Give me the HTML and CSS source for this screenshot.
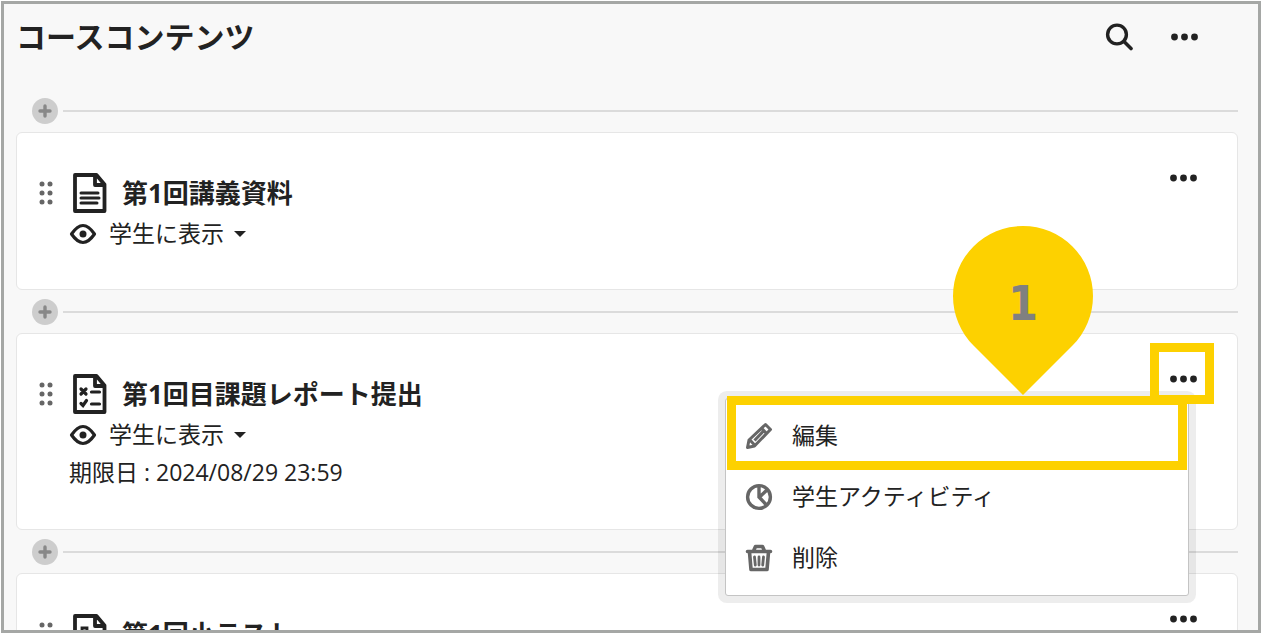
FILE: index.html
```html
<!DOCTYPE html>
<html lang="ja">
<head>
<meta charset="utf-8">
<title>コースコンテンツ</title>
<link rel="stylesheet" href="styles.css">
</head>
<body>
<svg class="defs" aria-hidden="true">
  <symbol id="more" viewBox="0 0 27 30"><circle cx="3.5" cy="15" r="3.4"/><circle cx="13.5" cy="15" r="3.4"/><circle cx="23.5" cy="15" r="3.4"/></symbol>
  <symbol id="grip" viewBox="0 0 14 26"><circle cx="3" cy="4" r="2.5"/><circle cx="11" cy="4" r="2.5"/><circle cx="3" cy="13" r="2.5"/><circle cx="11" cy="13" r="2.5"/><circle cx="3" cy="22" r="2.5"/><circle cx="11" cy="22" r="2.5"/></symbol>
  <symbol id="page" viewBox="0 0 34 40"><path d="M2 2H23.5L31.5 11.5V38H2Z M22 2V12H31.5" fill="none" stroke="currentColor" stroke-width="3.8" stroke-linejoin="round"/></symbol>
  <symbol id="eye" viewBox="0 0 28 24"><path d="M2.500 12C7 5.500 10 3.500 14 3.500S21 5.500 25.500 12C21 18.500 18 20.500 14 20.500S7 18.500 2.500 12Z" fill="none" stroke="currentColor" stroke-width="3.2" stroke-linejoin="round"/><circle cx="14" cy="12" r="3.5"/></symbol>
  <symbol id="plus" viewBox="0 0 26 26"><path d="M13 8V18M8 13H18" stroke="currentColor" stroke-width="3.4" stroke-linecap="round"/></symbol>
</svg>
<main class="frame">
  <header class="header">
    <h1 class="header-title">コースコンテンツ</h1>
    <button class="icon-button" aria-label="検索"><svg width="28" height="30" viewBox="0 0 28 30"><path d="M19 19.500L26 26.500" stroke="currentColor" stroke-width="3.6" stroke-linecap="round"/><circle cx="12" cy="12.500" r="9.400" fill="none" stroke="currentColor" stroke-width="3.400"/></svg></button>
    <button class="icon-button" aria-label="その他のオプション"><svg width="27" height="30"><use href="#more"/></svg></button>
  </header>

  <div class="divider"><button class="add" aria-label="コンテンツを追加"><svg width="26" height="26"><use href="#plus"/></svg></button></div>
  <section class="card">
    <svg class="grip" width="14" height="26"><use href="#grip"/></svg>
    <div class="content">
      <div class="title-row">
        <svg width="34" height="40" viewBox="0 0 34 40"><use href="#page"/><path d="M8 20H25M8 25H26M8 30H24" stroke="currentColor" stroke-width="3" stroke-linecap="round"/></svg>
        <h2 class="title">第1回講義資料</h2>
      </div>
      <button class="status"><svg width="28" height="24"><use href="#eye"/></svg><span class="label">学生に表示</span><span class="caret"></span></button>
    </div>
    <button class="icon-button" aria-label="その他のオプション"><svg width="27" height="30"><use href="#more"/></svg></button>
  </section>

  <div class="divider"><button class="add" aria-label="コンテンツを追加"><svg width="26" height="26"><use href="#plus"/></svg></button></div>
  <section class="card">
    <svg class="grip" width="14" height="26"><use href="#grip"/></svg>
    <div class="content">
      <div class="title-row">
        <svg width="34" height="40" viewBox="0 0 34 40"><use href="#page"/><path d="M8 15L13 20M13 15L8 20M18.500 18H26.500M8 29.500L10 31.500L13.500 26.500M18.500 30H26.500" fill="none" stroke="currentColor" stroke-width="3.2" stroke-linecap="round"/></svg>
        <h2 class="title">第1回目課題レポート提出</h2>
      </div>
      <button class="status"><svg width="28" height="24"><use href="#eye"/></svg><span class="label">学生に表示</span><span class="caret"></span></button>
      <p class="due">期限日 : 2024/08/29 23:59</p>
    </div>
    <button class="icon-button" aria-label="その他のオプション"><svg width="27" height="30"><use href="#more"/></svg></button>
    <div class="menu">
      <button class="menu-item"><svg width="28" height="28" viewBox="0 0 28 28"><path d="M2.500 25.500L4 18L20.500 2.500L25.500 7.500L9.500 24ZM16.500 6L21.500 11.500M4.500 17.500L10 23.500M9.500 18.500L18.500 9" fill="none" stroke="currentColor" stroke-width="3" stroke-linejoin="round"/></svg><span class="label">編集</span></button>
      <button class="menu-item"><svg width="28" height="28" viewBox="0 0 28 28"><circle cx="14" cy="14" r="11.400" fill="none" stroke="currentColor" stroke-width="3.400"/><path d="M14 3V14L21 21.500M14.500 14L22 7" fill="none" stroke="currentColor" stroke-width="3.400"/></svg><span class="label">学生アクティビティ</span></button>
      <button class="menu-item"><svg width="28" height="28" viewBox="0 0 28 28"><path d="M2.500 7.500H25.500M8.500 7L10.500 2.500H17.500L19.500 7M4.500 8L6 25.500H22L23.500 8" fill="none" stroke="currentColor" stroke-width="3.600" stroke-linecap="round" stroke-linejoin="round"/><path d="M9.500 13L10.300 21M14 13V21M18.500 13L17.700 21" stroke="currentColor" stroke-width="2.800" stroke-linecap="round"/></svg><span class="label">削除</span></button>
      <div class="mark mark-edit"></div>
      <div class="mark mark-more"></div>
      <div class="pin"><svg width="140" height="170" viewBox="0 0 140 170"><path d="M20.500 119.500A70 70 0 1 1 119.500 119.500L70 169Z"/></svg><span class="pin-number">1</span></div>
    </div>
  </section>

  <div class="divider"><button class="add" aria-label="コンテンツを追加"><svg width="26" height="26"><use href="#plus"/></svg></button></div>
  <section class="card">
    <svg class="grip" width="14" height="26"><use href="#grip"/></svg>
    <div class="content">
      <div class="title-row">
        <svg width="34" height="40" viewBox="0 0 34 40"><use href="#page"/><path d="M9 14H14V20H9ZM9 26H14V32H9ZM19 18H26M19 30H26" fill="none" stroke="currentColor" stroke-width="2.800"/></svg>
        <h2 class="title">第1回小テスト</h2>
      </div>
      <button class="status"><svg width="28" height="24"><use href="#eye"/></svg><span class="label">学生に表示</span><span class="caret"></span></button>
    </div>
    <button class="icon-button" aria-label="その他のオプション"><svg width="27" height="30"><use href="#more"/></svg></button>
  </section>
</main>
</body>
</html>
```
FILE: styles.css
```css
* { box-sizing: border-box; }
body {
  margin: 0;
  padding: 1px;
  background: #fff;
  color: #222;
  font-family: "Open Sans", "Noto Sans CJK JP", sans-serif;
  font-size: 23px;
}
svg { display: block; flex: none; fill: currentColor; }
button {
  padding: 0;
  border: 0;
  background: none;
  color: inherit;
  font: inherit;
  cursor: pointer;
}
.defs { position: absolute; width: 0; height: 0; }
.frame {
  height: calc(100vh - 2px);
  padding: 0 20px 0 12px;
  overflow: hidden;
  border: 3px solid #a5a7a5;
  background: #f8f8f8;
}
.header {
  display: flex;
  align-items: center;
  gap: 38px;
  padding: 0 40px 19px 0;
}
.header-title {
  flex: 1;
  margin: 0;
  font-size: 30px;
  line-height: 66px;
}
.divider {
  display: flex;
  align-items: center;
  gap: 5px;
  height: 43px;
  padding-left: 16px;
}
.divider::after {
  content: "";
  flex: 1;
  height: 2px;
  background: #dbdbdb;
}
.add {
  border-radius: 50%;
  background: #cdcdcd;
  color: #888;
}
.card {
  position: relative;
  display: flex;
  align-items: flex-start;
  padding: 30px 40px 34px 22px;
  border: 1px solid #e6e6e6;
  border-radius: 6px;
  background: #fff;
}
.grip { margin: 17px 16px 0 0; color: #666; }
.content { flex: 1; padding-top: 10px; }
.title-row {
  display: flex;
  align-items: center;
  gap: 15px;
  height: 40px;
  padding-left: 4px;
}
.title { margin: 0; font-size: 26px; line-height: 40px; }
.status {
  display: flex;
  align-items: center;
  gap: 12px;
  height: 42px;
  color: #222;
}
.label { padding-bottom: 4px; }
.caret {
  border: 6px solid transparent;
  border-top-color: #222;
  border-bottom: 0;
  margin-left: -2px;
}
.due { margin: 0; padding-bottom: 7px; line-height: 32px; }
.menu {
  position: absolute;
  z-index: 1;
  top: 64px;
  right: 48px;
  width: 464px;
  padding: 6px 0 7px;
  border: 1px solid #c4c4c4;
  border-radius: 3px;
  background: #fff;
  box-shadow: 0 0 0 7px rgba(0, 0, 0, 0.07);
}
.menu-item {
  display: flex;
  align-items: center;
  gap: 19px;
  width: 100%;
  height: 61px;
  padding-left: 19px;
}
.menu-item svg { color: #666; }
.mark { position: absolute; border: 9px solid #fdd100; pointer-events: none; }
.mark-edit { top: -3px; left: 1px; right: 1px; height: 74px; }
.mark-more { top: -56px; right: -26px; width: 64px; height: 61px; }
.pin {
  position: absolute;
  top: -173px;
  right: 95px;
  width: 140px;
  color: #fdd100;
}
.pin-number {
  position: absolute;
  top: 47px;
  left: 0;
  width: 100%;
  color: #808080;
  font: bold 48px/60px "DejaVu Sans Condensed", "DejaVu Sans", sans-serif;
  text-align: center;
}
```
